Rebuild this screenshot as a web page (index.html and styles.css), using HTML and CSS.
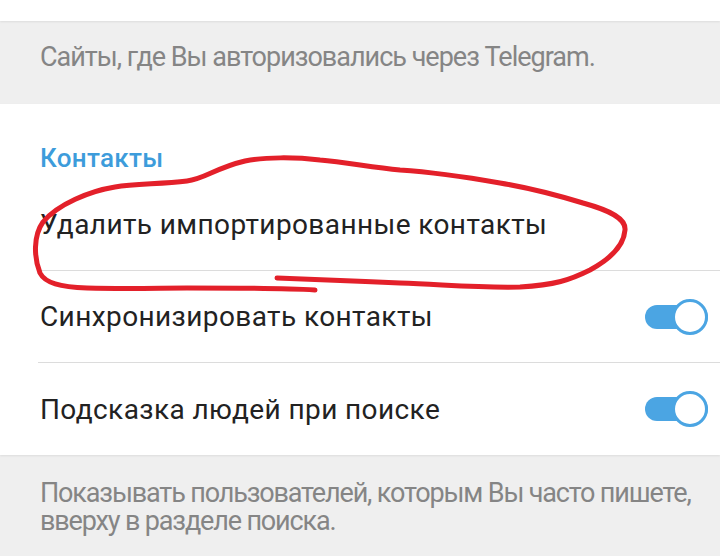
FILE: index.html
```html
<!DOCTYPE html>
<html lang="ru">

<head>
    <meta charset="UTF-8">
    <meta name="viewport" content="width=device-width, initial-scale=1.0">
    <title>Конфиденциальность</title>
    <link rel="stylesheet" href="styles.css">
</head>

<body>
    <div class="screen">
        <div class="top-gap"></div>
        <div class="info">Сайты, где Вы авторизовались через Telegram.</div>

        <div class="section">
            <div class="section-title">Контакты</div>
            <div class="row">
                <span class="row-text">Удалить импортированные контакты</span>
            </div>
            <div class="row">
                <span class="row-text">Синхронизировать контакты</span>
                <span class="switch"><span class="knob"></span></span>
            </div>
            <div class="row">
                <span class="row-text">Подсказка людей при поиске</span>
                <span class="switch"><span class="knob"></span></span>
            </div>
        </div>

        <div class="info info-bottom">Показывать пользователей, которым Вы часто пишете, вверху в разделе поиска.</div>

        <!-- hand-drawn marker over the first row -->
        <svg class="scribble" width="720" height="556" viewBox="0 0 720 556">
            <path d="M277 278 C330 280 360 281 400 283 C450 285 480 288 520 287 C555 285 570 280 590 270 C612 258 624 244 625 230 C626 219 612 211 583 203 C550 193 530 188 500 183 C460 176 430 172 400 170 C370 167 345 162 320 160 C295 157 265 157 245 161 C215 168 205 179 187 181 C160 184 135 184 115 187 C90 191 58 204 43 222 C33 236 34 258 40 273 C45 283 60 287 87 288 C130 289 160 288 187 288 C240 288 280 288 315 290"
                fill="none" stroke="#e3202a" stroke-width="5" stroke-linecap="round" stroke-linejoin="round" />
        </svg>
    </div>
</body>

</html>
```

FILE: styles.css
```css
html,
body {
    margin: 0;
    padding: 0;
}

body {
    background: #efefef;
    font-family: Roboto, "Noto Sans", sans-serif;
}

.screen {
    position: relative;
    width: 720px;
    height: 556px;
    overflow: hidden;
    background: #efefef;
}

.top-gap {
    height: 21px;
    background: #fff;
    box-shadow: 0 1px 2px rgba(0, 0, 0, 0.08);
}

.info {
    padding: 22px 40px 0;
    height: 61px;
    font-size: 27px;
    line-height: 28px;
    color: #858585;
    letter-spacing: -1px;
}

.info-bottom {
    padding: 24px 0 0 40px;
    height: auto;
    letter-spacing: -1.15px;
}

.section {
    background: #fff;
    padding-top: 39px;
    height: 312px;
    box-shadow: 0 1px 2px rgba(0, 0, 0, 0.08);
}

.section-title {
    padding: 0 40px;
    font-size: 26px;
    line-height: 30px;
    font-weight: 500;
    color: #3d9cdb;
    height: 36px;
    letter-spacing: 0.3px;
}

.row {
    display: flex;
    align-items: center;
    justify-content: space-between;
    height: 92px;
    margin-left: 38px;
    padding-right: 12px;
    border-bottom: 1px solid #dcdcdc;
    box-sizing: border-box;
}

.row:last-child {
    border-bottom: none;
}

.row-text {
    padding-left: 2px;
    font-size: 28px;
    color: #222;
    letter-spacing: 0.4px;
}

.switch {
    display: flex;
    align-items: center;
    width: 63px;
    height: 24px;
    border-radius: 12px;
    background: #4ba5e3;
}

.knob {
    margin-left: auto;
    width: 30px;
    height: 30px;
    border: 3px solid #4ba5e3;
    border-radius: 50%;
    background: #fff;
}

.scribble {
    position: absolute;
    left: 0;
    top: 0;
    pointer-events: none;
}
```
